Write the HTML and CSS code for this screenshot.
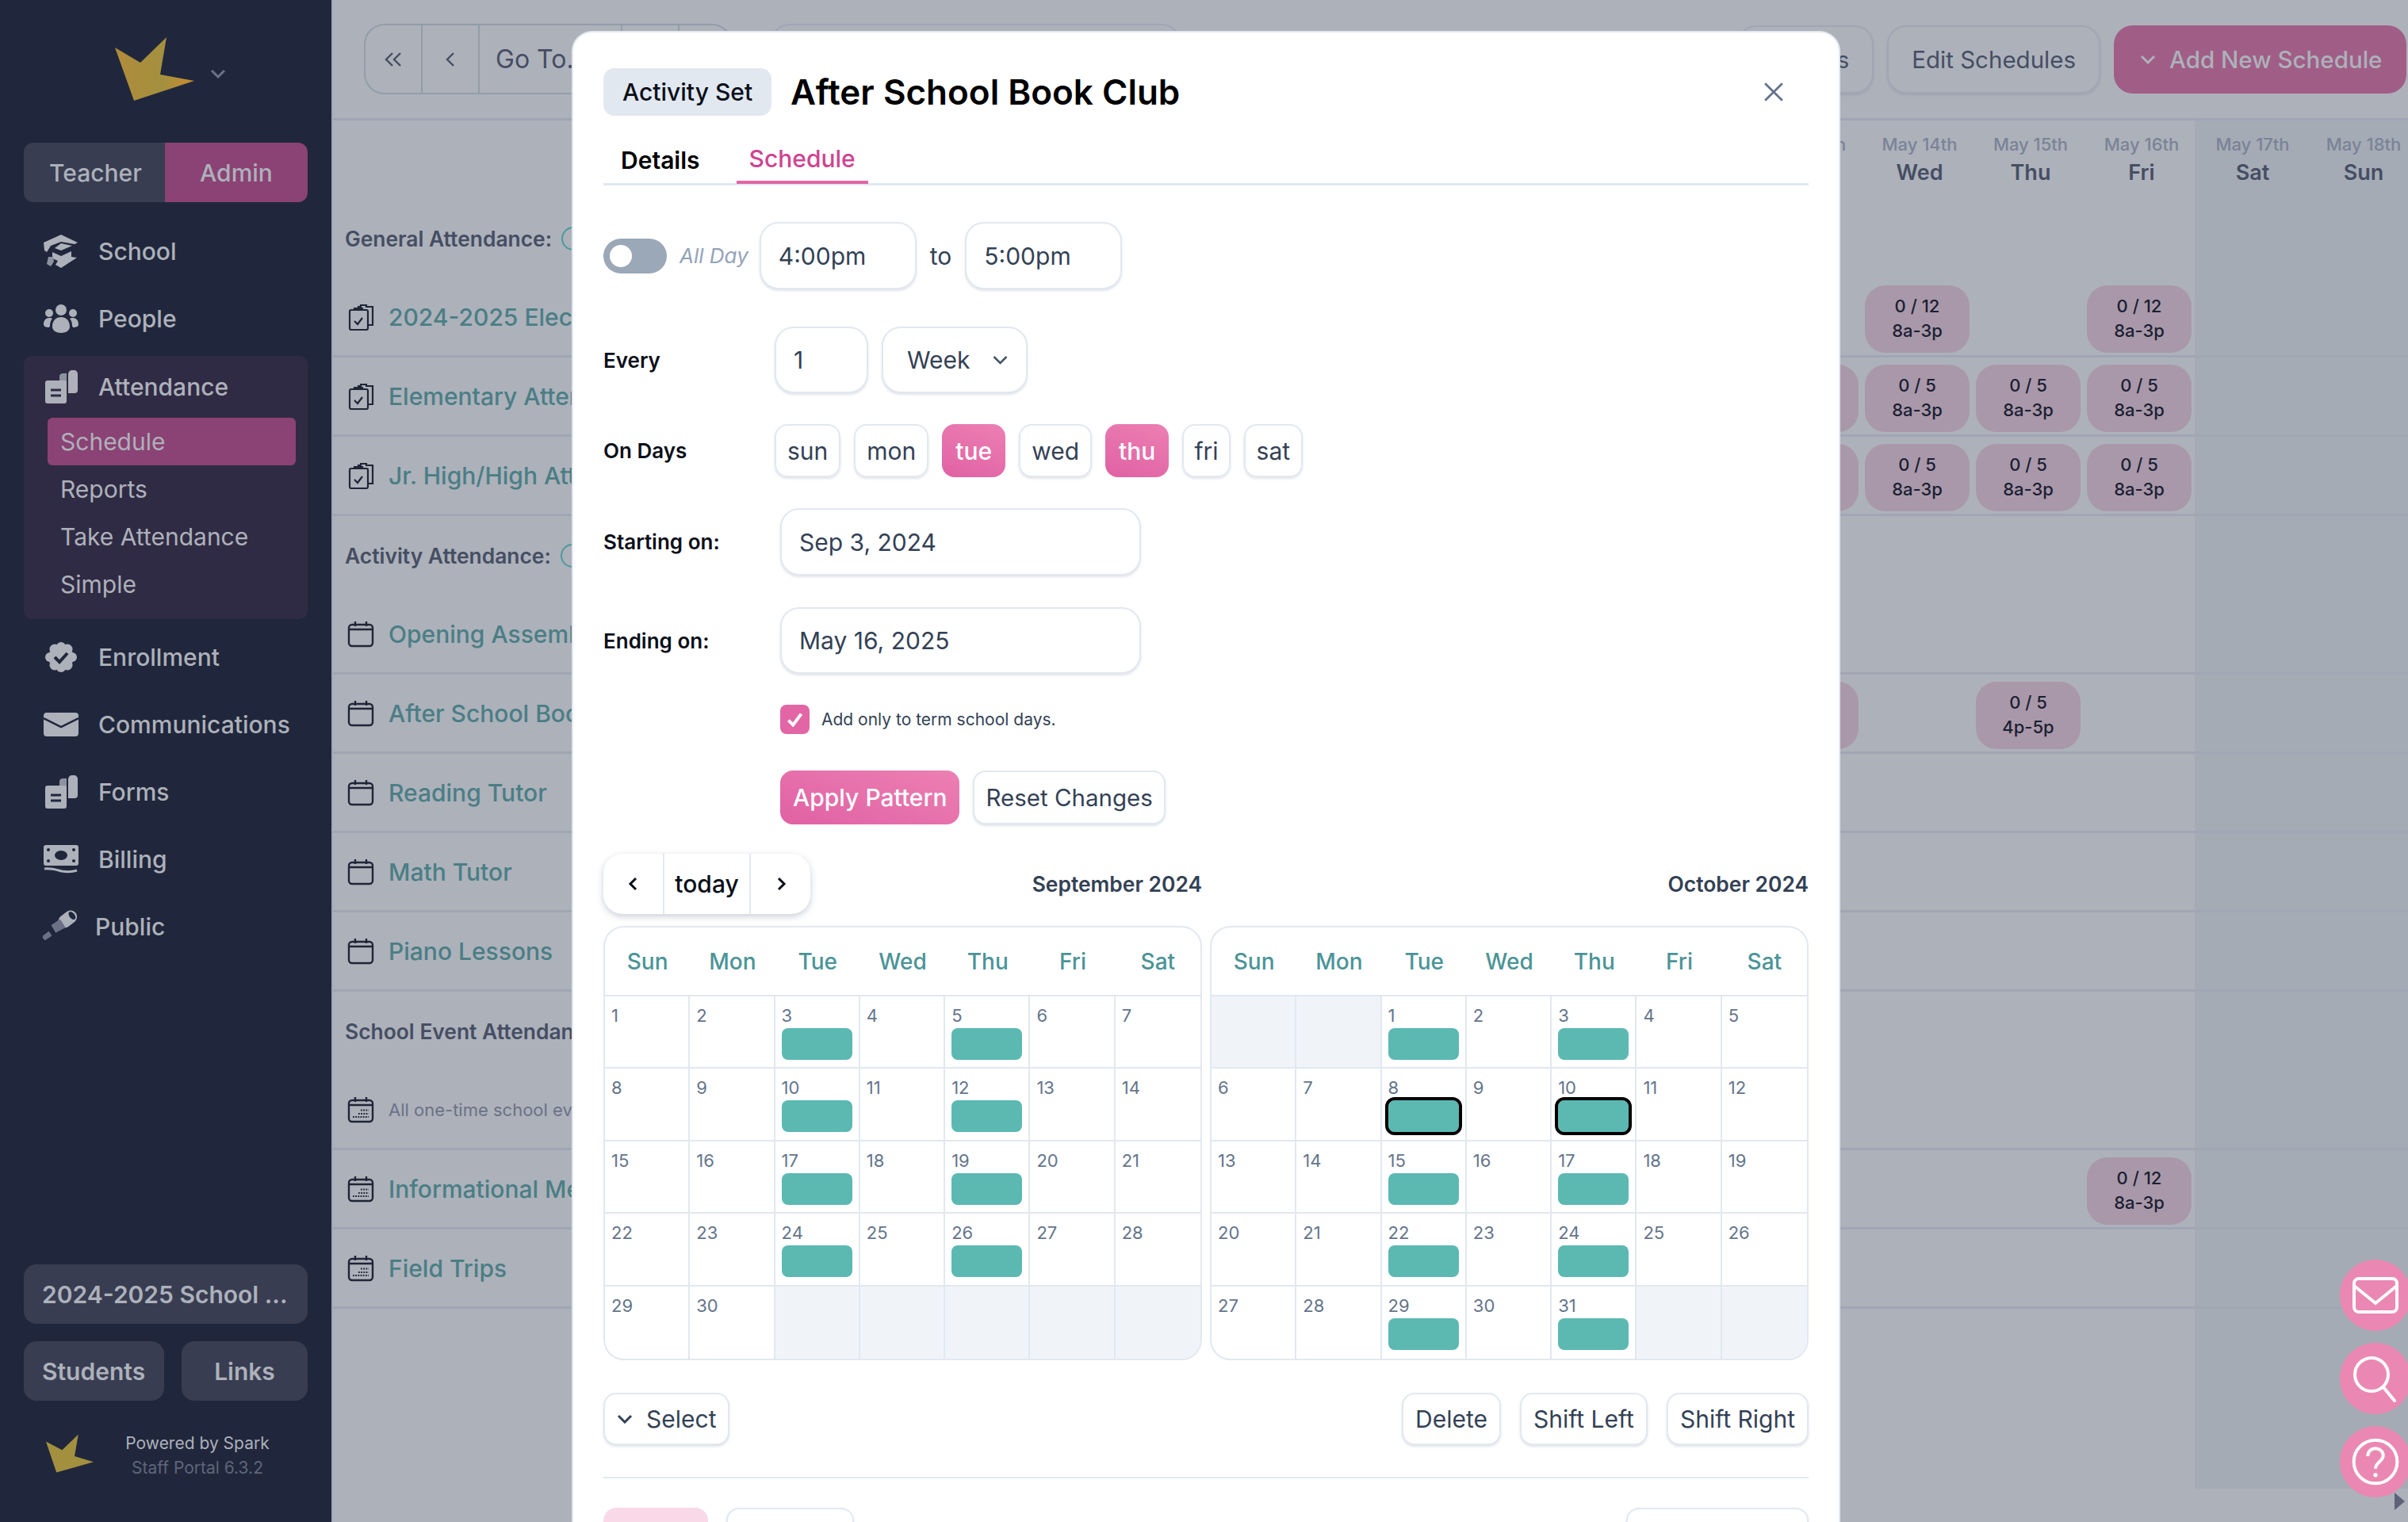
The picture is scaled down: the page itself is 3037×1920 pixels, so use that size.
FILE: index.html
```html
<!DOCTYPE html>
<html lang="en">
<head>
    <meta charset="UTF-8">
    <title>Staff Portal - Schedule</title>
    <link rel="stylesheet" href="styles.css">
</head>
<body>
    <aside class="sidebar">
        <div class="brand">
            <svg class="brand-star" viewBox="0 0 100 80">
                <defs>
                    <linearGradient id="starfill" x1="0" y1="0" x2="1" y2="0">
                        <stop offset="0" stop-color="#b08c3a"/>
                        <stop offset=".6" stop-color="#a3903f"/>
                        <stop offset="1" stop-color="#c98a2e"/>
                    </linearGradient>
                </defs>
                <polygon fill="url(#starfill)" points="0,13 32,32 65,0 57,47 100,55 24,80"/>
            </svg>
            <svg class="brand-caret" viewBox="0 0 20 12"><path d="M2 2l8 8 8-8" fill="none" stroke="#6b7287" stroke-width="3"/></svg>
        </div>
        <div class="role-switch">
            <div class="role">Teacher</div>
            <div class="role role-on">Admin</div>
        </div>
        <nav class="side-nav">
            <a class="side-link">
                <svg class="side-icon" viewBox="0 0 44 42"><path fill="#adb1ba" d="M22 0l21 10-4 2-17-3-13 5-5 8-3-2-1-10z"/><path fill="#adb1ba" d="M22 11l14 3-14 6-8-3z"/><path fill="#adb1ba" d="M11 22l11 5 13-6v7l7 1-20 13-7-4 3-5-7-3z"/><path fill="#8d92a0" d="M6 28h6l1 6-4 6-5-3z"/></svg>
                <span>School</span>
            </a>
            <a class="side-link">
                <svg class="side-icon" viewBox="0 0 44 36"><circle cx="22" cy="7" r="7" fill="#adb1ba"/><circle cx="7" cy="11" r="5" fill="#adb1ba"/><circle cx="37" cy="11" r="5" fill="#adb1ba"/><path fill="#adb1ba" d="M11 28c0-8 5-12 11-12s11 4 11 12c0 5-5 8-11 8s-11-3-11-8zM0 25c0-5 3-8 7-8 2 0 3 .5 4 1-2 2-3 5-3 9l-1 2c-4 0-7-1-7-4zM44 25c0-5-3-8-7-8-2 0-3 .5-4 1 2 2 3 5 3 9l1 2c4 0 7-1 7-4z"/></svg>
                <span>People</span>
            </a>
            <div class="side-group">
                <a class="side-link">
                    <svg class="side-icon" viewBox="0 0 44 42"><path fill="#adb1ba" d="M31 6c0-4 2-6 5-6h2c3 0 5 2 5 5v20c0 3-2 4-4 4h-8z"/><path fill="#8d92a0" d="M20 8c0-3 2-4 4-4h5v12h-9z"/><rect x="2" y="13" width="27" height="29" rx="3" fill="#adb1ba"/><path stroke="#302b44" stroke-width="3" d="M9 25h13M9 32h13"/></svg>
                    <span>Attendance</span>
                </a>
                <a class="sub-link sub-on">Schedule</a>
                <a class="sub-link">Reports</a>
                <a class="sub-link">Take Attendance</a>
                <a class="sub-link">Simple</a>
            </div>
            <a class="side-link">
                <svg class="side-icon" viewBox="0 0 44 38"><g fill="#adb1ba"><ellipse cx="22" cy="19" rx="16" ry="15"/><circle cx="14" cy="9" r="6.5"/><circle cx="30" cy="9" r="6.5"/><circle cx="14" cy="29" r="6.5"/><circle cx="30" cy="29" r="6.5"/><circle cx="8" cy="19" r="6"/><circle cx="36" cy="19" r="6"/><circle cx="22" cy="6" r="6"/><circle cx="22" cy="32" r="6"/></g><path fill="none" stroke="#20273c" stroke-width="4" d="M14 19l6 6 10-11"/></svg>
                <span>Enrollment</span>
            </a>
            <a class="side-link">
                <svg class="side-icon" viewBox="0 0 44 30"><rect y="0" width="44" height="30" rx="4" fill="#adb1ba"/><path fill="none" stroke="#20273c" stroke-width="2.5" d="M0 7l22 11L44 7"/></svg>
                <span>Communications</span>
            </a>
            <a class="side-link">
                <svg class="side-icon" viewBox="0 0 44 42"><path fill="#adb1ba" d="M31 6c0-4 2-6 5-6h2c3 0 5 2 5 5v20c0 3-2 4-4 4h-8z"/><path fill="#8d92a0" d="M20 8c0-3 2-4 4-4h5v12h-9z"/><rect x="2" y="13" width="27" height="29" rx="3" fill="#adb1ba"/><path stroke="#20273c" stroke-width="3" d="M9 25h13M9 32h13"/></svg>
                <span>Forms</span>
            </a>
            <a class="side-link">
                <svg class="side-icon" viewBox="0 0 44 36"><rect y="0" width="44" height="26" rx="3" fill="#adb1ba"/><ellipse cx="22" cy="13" rx="8" ry="6" fill="#20273c"/><circle cx="6" cy="6" r="2" fill="#20273c"/><circle cx="38" cy="6" r="2" fill="#20273c"/><circle cx="6" cy="20" r="2" fill="#20273c"/><circle cx="38" cy="20" r="2" fill="#20273c"/><path fill="none" stroke="#adb1ba" stroke-width="3" d="M1 30c8-1 14 1 22 3 6 1 13 1 19-1"/></svg>
                <span>Billing</span>
            </a>
            <a class="side-link side-link-tight">
                <svg class="side-icon side-icon-big" viewBox="0 0 46 46"><g transform="rotate(-38 33 13)"><rect x="20" y="5" width="27" height="17" rx="8.5" fill="#adb1ba"/><ellipse cx="41" cy="13.500" rx="3.500" ry="6" fill="#20273c"/></g><g fill="#6b7287"><path d="M12 21l12-8 7 11-13 7z"/><path d="M1 35l8-6 4 6-9 6-3-3z"/></g></svg>
                <span>Public</span>
            </a>
        </nav>
        <div class="side-bottom">
            <div class="side-btn">2024-2025 School ...</div>
            <div class="side-btn-row">
                <div class="side-btn side-btn-students">Students</div>
                <div class="side-btn side-btn-links">Links</div>
            </div>
            <div class="powered">
                <svg class="powered-star" viewBox="0 0 100 80"><polygon fill="#a3903f" points="0,15 34,33 68,0 60,46 100,58 22,80"/></svg>
                <div class="powered-text">
                    <div>Powered by Spark</div>
                    <div class="powered-ver">Staff Portal 6.3.2</div>
                </div>
            </div>
        </div>
    </aside>

    <main class="main">
        <header class="topbar">
            <div class="btn-group">
                <div class="bg-cell cell-first">
                    <svg class="bar-icon" viewBox="0 0 24 20"><path d="M11 2L3 10l8 8M21 2l-8 8 8 8" fill="none" stroke="#454e63" stroke-width="2.4"/></svg>
                </div>
                <div class="bg-cell cell-mid">
                    <svg class="bar-icon" viewBox="0 0 24 20"><path d="M16 2l-8 8 8 8" fill="none" stroke="#454e63" stroke-width="2.4"/></svg>
                </div>
                <div class="bg-cell cell-go">Go To...</div>
                <div class="bg-cell cell-mid"></div>
                <div class="bg-cell cell-last"></div>
            </div>
            <div class="btn-outline btn-range"></div>
            <div class="bar-right">
                <div class="btn-outline btn-filters">Filters</div>
                <div class="btn-outline">Edit Schedules</div>
                <div class="btn-add">
                    <svg class="add-caret" viewBox="0 0 20 12"><path d="M2 2l8 8 8-8" fill="none" stroke="#adb1ba" stroke-width="3"/></svg>
                    Add New Schedule
                </div>
            </div>
        </header>

        <div class="row row-head">
            <div class="name"></div>
            <div class="day"><small>May 13th</small>Tue</div>
            <div class="day"><small>May 14th</small>Wed</div>
            <div class="day"><small>May 15th</small>Thu</div>
            <div class="day"><small>May 16th</small>Fri</div>
            <div class="day wknd"><small>May 17th</small>Sat</div>
            <div class="day wknd"><small>May 18th</small>Sun</div>
        </div>

        <div class="row row-section">
            <div class="name section-name">General Attendance:<span class="help-dot"></span></div>
            <div></div><div></div><div></div><div></div><div class="wknd"></div><div class="wknd"></div>
        </div>
        <div class="row">
            <div class="name"><svg class="row-icon"><use href="#clip"/></svg><a>2024-2025 Elective Attendance</a></div>
            <div></div><div><div class="slot">0 / 12<br>8a-3p</div></div><div></div><div><div class="slot">0 / 12<br>8a-3p</div></div><div class="wknd"></div><div class="wknd"></div>
        </div>
        <div class="row">
            <div class="name"><svg class="row-icon"><use href="#clip"/></svg><a>Elementary Attendance</a></div>
            <div><div class="slot">0 / 5<br>8a-3p</div></div><div><div class="slot">0 / 5<br>8a-3p</div></div><div><div class="slot">0 / 5<br>8a-3p</div></div><div><div class="slot">0 / 5<br>8a-3p</div></div><div class="wknd"></div><div class="wknd"></div>
        </div>
        <div class="row">
            <div class="name"><svg class="row-icon"><use href="#clip"/></svg><a>Jr. High/High Attendance</a></div>
            <div><div class="slot">0 / 5<br>8a-3p</div></div><div><div class="slot">0 / 5<br>8a-3p</div></div><div><div class="slot">0 / 5<br>8a-3p</div></div><div><div class="slot">0 / 5<br>8a-3p</div></div><div class="wknd"></div><div class="wknd"></div>
        </div>

        <div class="row row-section">
            <div class="name section-name">Activity Attendance:<span class="help-dot"></span></div>
            <div></div><div></div><div></div><div></div><div class="wknd"></div><div class="wknd"></div>
        </div>
        <div class="row">
            <div class="name"><svg class="row-icon"><use href="#cal"/></svg><a>Opening Assembly</a></div>
            <div></div><div></div><div></div><div></div><div class="wknd"></div><div class="wknd"></div>
        </div>
        <div class="row">
            <div class="name"><svg class="row-icon"><use href="#cal"/></svg><a>After School Book Club</a></div>
            <div><div class="slot">0 / 5<br>4p-5p</div></div><div></div><div><div class="slot">0 / 5<br>4p-5p</div></div><div></div><div class="wknd"></div><div class="wknd"></div>
        </div>
        <div class="row">
            <div class="name"><svg class="row-icon"><use href="#cal"/></svg><a>Reading Tutor</a></div>
            <div></div><div></div><div></div><div></div><div class="wknd"></div><div class="wknd"></div>
        </div>
        <div class="row">
            <div class="name"><svg class="row-icon"><use href="#cal"/></svg><a>Math Tutor</a></div>
            <div></div><div></div><div></div><div></div><div class="wknd"></div><div class="wknd"></div>
        </div>
        <div class="row">
            <div class="name"><svg class="row-icon"><use href="#cal"/></svg><a>Piano Lessons</a></div>
            <div></div><div></div><div></div><div></div><div class="wknd"></div><div class="wknd"></div>
        </div>

        <div class="row row-section">
            <div class="name section-name">School Event Attendance:</div>
            <div></div><div></div><div></div><div></div><div class="wknd"></div><div class="wknd"></div>
        </div>
        <div class="row">
            <div class="name"><svg class="row-icon"><use href="#caldots"/></svg><span class="name-note">All one-time school events</span></div>
            <div></div><div></div><div></div><div></div><div class="wknd"></div><div class="wknd"></div>
        </div>
        <div class="row">
            <div class="name"><svg class="row-icon"><use href="#caldots"/></svg><a>Informational Meeting</a></div>
            <div></div><div></div><div></div><div><div class="slot">0 / 12<br>8a-3p</div></div><div class="wknd"></div><div class="wknd"></div>
        </div>
        <div class="row">
            <div class="name"><svg class="row-icon"><use href="#caldots"/></svg><a>Field Trips</a></div>
            <div></div><div></div><div></div><div></div><div class="wknd"></div><div class="wknd"></div>
        </div>
        <div class="row row-fill">
            <div class="name"></div>
            <div></div><div></div><div></div><div></div><div class="wknd"></div><div class="wknd"></div>
        </div>
    </main>

    <svg class="sprites" width="0" height="0">
        <symbol id="clip" viewBox="0 0 34 34">
            <g fill="none" stroke="#1f2637" stroke-width="2.2">
                <path d="M14 7V4h3V2h7v2h8v23h-6"/>
                <rect x="3" y="8" width="23" height="25" rx="2"/>
                <path d="M9 8V6h10v2"/>
                <path d="M9 22l4 4 6-8"/>
            </g>
        </symbol>
        <symbol id="cal" viewBox="0 0 34 34">
            <g fill="none" stroke="#1f2637" stroke-width="2.4">
                <rect x="2" y="5" width="30" height="27" rx="4"/>
                <path d="M10 1v6M24 1v6M2 11h30"/>
            </g>
        </symbol>
        <symbol id="caldots" viewBox="0 0 34 34">
            <g fill="none" stroke="#1f2637" stroke-width="2.4">
                <rect x="2" y="5" width="30" height="27" rx="4"/>
                <path d="M10 1v6M24 1v6M2 11h30"/>
                <path stroke-width="1.8" stroke-dasharray="1.8 1.4" d="M7 26h20M14 22h13M17 17.500h10"/>
            </g>
        </symbol>
    </svg>

    <div class="side-tools">
        <div class="tool">
            <svg class="tool-icon" viewBox="0 0 60 46"><rect x="3" y="2" width="54" height="42" rx="6" fill="none" stroke="#fff" stroke-width="4"/><path d="M3 11l27 22 27-22" fill="none" stroke="#fff" stroke-width="4"/></svg>
        </div>
        <div class="tool">
            <svg class="tool-icon" viewBox="0 0 60 60"><circle cx="25" cy="25" r="21" fill="none" stroke="#fff" stroke-width="4"/><path d="M40 41l14 17" fill="none" stroke="#fff" stroke-width="4" stroke-linecap="round"/></svg>
        </div>
        <div class="tool">
            <svg class="tool-icon" viewBox="0 0 68 68"><circle cx="34" cy="34" r="31" fill="none" stroke="#fff" stroke-width="4.5"/><path d="M23 26c0-7 5-11 11-11s11 4 11 10c0 9-11 9-11 19" fill="none" stroke="#fff" stroke-width="4.5"/><circle cx="34" cy="53" r="3" fill="#fff"/></svg>
        </div>
    </div>
    <div class="scroll-arrow"></div>

    <section class="modal">
        <div class="modal-head">
            <div class="kind-badge">Activity Set</div>
            <h1 class="modal-title">After School Book Club</h1>
            <svg class="modal-close" viewBox="0 0 24 24"><path d="M2 2l20 20M22 2L2 22" fill="none" stroke="#64748b" stroke-width="2.6"/></svg>
        </div>
        <div class="tabs">
            <div class="tab">Details</div>
            <div class="tab tab-on">Schedule</div>
        </div>

        <div class="form-row row-time">
            <div class="toggle"><span class="toggle-knob"></span></div>
            <span class="all-day">All Day</span>
            <div class="field field-time">4:00pm</div>
            <span class="to-word">to</span>
            <div class="field field-time">5:00pm</div>
        </div>

        <div class="form-row row-every">
            <label class="form-label">Every</label>
            <div class="field field-num">1</div>
            <div class="field field-select">Week
                <svg class="select-caret" viewBox="0 0 20 12"><path d="M2 2l8 8 8-8" fill="none" stroke="#475569" stroke-width="2.6"/></svg>
            </div>
        </div>

        <div class="form-row row-days">
            <label class="form-label">On Days</label>
            <div class="day-btn">sun</div>
            <div class="day-btn">mon</div>
            <div class="day-btn day-on">tue</div>
            <div class="day-btn">wed</div>
            <div class="day-btn day-on">thu</div>
            <div class="day-btn day-fri">fri</div>
            <div class="day-btn">sat</div>
        </div>

        <div class="form-row row-date">
            <label class="form-label label-wide">Starting on:</label>
            <div class="field field-date">Sep 3, 2024</div>
        </div>
        <div class="form-row row-date row-date-2">
            <label class="form-label label-wide">Ending on:</label>
            <div class="field field-date">May 16, 2025</div>
        </div>

        <div class="form-row row-check">
            <span class="checkbox"><svg viewBox="0 0 20 20"><path d="M3 11l5 5 9-12" fill="none" stroke="#fff" stroke-width="3.500"/></svg></span>
            <span class="check-text">Add only to term school days.</span>
        </div>

        <div class="form-row row-apply">
            <div class="btn btn-pink">Apply Pattern</div>
            <div class="btn btn-reset">Reset Changes</div>
        </div>

        <div class="cal-top">
            <div class="cal-top-left">
                <div class="cal-nav">
                    <div class="cal-nav-btn cal-nav-arrow"><svg viewBox="0 0 14 20"><path d="M10 3L3 10l7 7" fill="none" stroke="#0b0f19" stroke-width="3"/></svg></div>
                    <div class="cal-nav-btn cal-nav-today">today</div>
                    <div class="cal-nav-btn cal-nav-arrow"><svg viewBox="0 0 14 20"><path d="M4 3l7 7-7 7" fill="none" stroke="#0b0f19" stroke-width="3"/></svg></div>
                </div>
                <div class="cal-month">September 2024</div>
            </div>
            <div class="cal-month">October 2024</div>
        </div>

        <div class="cal-pair">
            <div class="cal">
                <div class="cal-dow">Sun</div><div class="cal-dow">Mon</div><div class="cal-dow">Tue</div><div class="cal-dow">Wed</div><div class="cal-dow">Thu</div><div class="cal-dow">Fri</div><div class="cal-dow">Sat</div>
                <div class="cell">1</div><div class="cell">2</div><div class="cell">3<div class="chip"></div></div><div class="cell">4</div><div class="cell">5<div class="chip"></div></div><div class="cell">6</div><div class="cell">7</div>
                <div class="cell">8</div><div class="cell">9</div><div class="cell">10<div class="chip"></div></div><div class="cell">11</div><div class="cell">12<div class="chip"></div></div><div class="cell">13</div><div class="cell">14</div>
                <div class="cell">15</div><div class="cell">16</div><div class="cell">17<div class="chip"></div></div><div class="cell">18</div><div class="cell">19<div class="chip"></div></div><div class="cell">20</div><div class="cell">21</div>
                <div class="cell">22</div><div class="cell">23</div><div class="cell">24<div class="chip"></div></div><div class="cell">25</div><div class="cell">26<div class="chip"></div></div><div class="cell">27</div><div class="cell">28</div>
                <div class="cell">29</div><div class="cell">30</div><div class="cell cell-off"></div><div class="cell cell-off"></div><div class="cell cell-off"></div><div class="cell cell-off"></div><div class="cell cell-off"></div>
            </div>
            <div class="cal">
                <div class="cal-dow">Sun</div><div class="cal-dow">Mon</div><div class="cal-dow">Tue</div><div class="cal-dow">Wed</div><div class="cal-dow">Thu</div><div class="cal-dow">Fri</div><div class="cal-dow">Sat</div>
                <div class="cell cell-off"></div><div class="cell cell-off"></div><div class="cell">1<div class="chip"></div></div><div class="cell">2</div><div class="cell">3<div class="chip"></div></div><div class="cell">4</div><div class="cell">5</div>
                <div class="cell">6</div><div class="cell">7</div><div class="cell">8<div class="chip chip-sel"></div></div><div class="cell">9</div><div class="cell">10<div class="chip chip-sel"></div></div><div class="cell">11</div><div class="cell">12</div>
                <div class="cell">13</div><div class="cell">14</div><div class="cell">15<div class="chip"></div></div><div class="cell">16</div><div class="cell">17<div class="chip"></div></div><div class="cell">18</div><div class="cell">19</div>
                <div class="cell">20</div><div class="cell">21</div><div class="cell">22<div class="chip"></div></div><div class="cell">23</div><div class="cell">24<div class="chip"></div></div><div class="cell">25</div><div class="cell">26</div>
                <div class="cell">27</div><div class="cell">28</div><div class="cell">29<div class="chip"></div></div><div class="cell">30</div><div class="cell">31<div class="chip"></div></div><div class="cell cell-off"></div><div class="cell cell-off"></div>
            </div>
        </div>

        <div class="form-row row-actions">
            <div class="btn btn-select">
                <svg class="select-caret-left" viewBox="0 0 20 12"><path d="M2 2l8 8 8-8" fill="none" stroke="#334155" stroke-width="3"/></svg>
                Select
            </div>
            <div class="actions-right">
                <div class="btn">Delete</div>
                <div class="btn">Shift Left</div>
                <div class="btn">Shift Right</div>
            </div>
        </div>

        <hr class="modal-rule">

        <div class="form-row row-foot">
            <div class="btn foot-save"></div>
            <div class="btn foot-cancel"></div>
            <div class="btn foot-other"></div>
        </div>
    </section>
</body>
</html>
```

FILE: styles.css
```css
* {
    box-sizing: border-box;
}
html, body {
    margin: 0;
    height: 100%;
}
body {
    font-family: "Inter", "Liberation Sans", sans-serif;
    font-size: 30px;
    display: flex;
    height: 1920px;
    overflow: hidden;
    background-color: #adb1ba;
    color: #454e63;
    position: relative;
}

/* sidebar */
.sidebar {
    width: 418px;
    flex: none;
    height: 1920px;
    background-color: #20273c;
    color: #adb1ba;
    padding: 0 30px;
    display: flex;
    flex-direction: column;
}
.brand {
    height: 180px;
    position: relative;
    display: flex;
    align-items: flex-start;
    padding: 47px 0 0 115px;
}
.brand-star {
    width: 100px;
    height: 80px;
}
.brand-caret {
    width: 20px;
    height: 12px;
    margin: 40px 0 0 20px;
}
.role-switch {
    display: flex;
    height: 75px;
    border-radius: 12px;
    overflow: hidden;
}
.role {
    width: 178px;
    background-color: #383d52;
    display: flex;
    align-items: center;
    padding-left: 32px;
    font-weight: 500;
}
.role-on {
    width: 180px;
    background-color: #8b4274;
    justify-content: center;
    padding-left: 0;
}
.side-nav {
    margin-top: 19px;
}
.side-link {
    height: 85px;
    display: flex;
    align-items: center;
    gap: 25px;
    padding-left: 25px;
    font-weight: 500;
}
.side-link-tight {
    gap: 23px;
    padding-left: 23px;
}
.side-icon {
    width: 44px;
    height: 42px;
    flex: none;
}
.side-icon-big {
    height: 46px;
}
.side-group {
    background-color: #302b44;
    border-radius: 10px;
    height: 332px;
    margin: 5px 0;
}
.side-group .side-link {
    height: 78px;
}
.sub-link {
    display: flex;
    align-items: center;
    height: 60px;
    margin: 0 15px 0 30px;
    padding-left: 16px;
    border-radius: 6px;
}
.sub-on {
    background-color: #8b4274;
}
.side-bottom {
    margin-top: auto;
    padding-bottom: 53px;
}
.side-btn {
    height: 75px;
    border-radius: 16px;
    background-color: #383d52;
    display: flex;
    align-items: center;
    padding-left: 23px;
    font-weight: 600;
    white-space: nowrap;
}
.side-btn-row {
    display: flex;
    gap: 22px;
    margin-top: 22px;
}
.side-btn-students {
    width: 177px;
}
.side-btn-links {
    flex: 1;
    justify-content: center;
    padding-left: 0;
}
.powered {
    display: flex;
    align-items: flex-start;
    margin-top: 38px;
    padding-left: 28px;
}
.powered-star {
    width: 60px;
    height: 49px;
    margin-top: 4px;
    flex: none;
}
.powered-text {
    flex: 1;
    text-align: center;
    font-size: 21px;
    line-height: 31px;
    padding-right: 8px;
    color: #adb1ba;
}
.powered-ver {
    color: #5f6579;
}

/* main schedule behind the modal */
.main {
    flex: 1;
    height: 1920px;
    border-left: 2px solid #a0a6b3;
    overflow: hidden;
}
.topbar {
    height: 152px;
    border-bottom: 3px solid #a0a6b3;
    display: flex;
    padding: 30px 0 0 39px;
    align-items: flex-start;
}
.btn-group {
    display: flex;
    height: 89px;
    border: 2px solid #919eaa;
    border-radius: 26px;
}
.bg-cell {
    display: flex;
    align-items: center;
    justify-content: center;
    border-left: 2px solid #919eaa;
    width: 72px;
}
.cell-first {
    border-left: 0;
    width: 70px;
}
.cell-go {
    width: 180px;
    justify-content: flex-start;
    padding-left: 20px;
    font-size: 32px;
    white-space: nowrap;
}
.cell-last {
    width: 67px;
}
.bar-icon {
    width: 24px;
    height: 20px;
}
.btn-outline {
    height: 86px;
    padding: 0 29px;
    border: 2px solid #a0a6b3;
    border-radius: 24px;
    display: flex;
    align-items: center;
    white-space: nowrap;
    font-size: 29.5px;
    box-shadow: 0 2px 3px rgba(100, 110, 130, 0.2);
}
.btn-range {
    width: 517px;
    margin-left: 48px;
}
.bar-right {
    margin-left: auto;
    display: flex;
    gap: 17px;
    padding-right: 2px;
    margin-top: 2px;
}
.btn-filters {
    width: 172px;
    justify-content: flex-end;
}
.btn-add {
    height: 86px;
    width: 369px;
    border-radius: 24px;
    background-color: #a05e87;
    color: #adb1ba;
    display: flex;
    align-items: center;
    gap: 17px;
    padding-left: 33px;
    white-space: nowrap;
    font-size: 29.5px;
    font-weight: 500;
}
.add-caret {
    width: 20px;
    height: 12px;
}

.row {
    display: grid;
    grid-template-columns: 1788px repeat(6, 140px);
    height: 100px;
    border-bottom: 3px solid #a0a6b3;
}
.row-section {
    border-bottom: 0;
}
.row-head {
    height: 99px;
    border-bottom: 0;
}
.row-fill {
    height: 227px;
    border-bottom: 0;
}
.wknd {
    background-color: #a5abb5;
}
.day {
    text-align: center;
    font-size: 27px;
    font-weight: 600;
    line-height: 36px;
    padding: 12px 0 0 6px;
}
.day small {
    display: block;
    font-size: 22px;
    font-weight: 500;
    color: #7a8397;
    line-height: 36px;
}
.name {
    display: flex;
    align-items: center;
    padding-left: 18px;
    overflow: hidden;
    white-space: nowrap;
}
.name a {
    color: #4a7e85;
    font-weight: 500;
}
.name-note {
    font-size: 22px;
    color: #6b7287;
}
.section-name {
    padding-left: 15px;
    font-size: 26.4px;
    font-weight: 600;
}
.help-dot {
    width: 30px;
    height: 30px;
    border: 2.5px solid #4a9a9a;
    border-radius: 50%;
    margin-left: 12px;
}
.row-icon {
    width: 34px;
    height: 34px;
    margin-right: 18px;
    flex: none;
}
.slot {
    width: 132px;
    height: 85px;
    margin: 9px 0 0 4px;
    padding-top: 11px;
    border-radius: 26px;
    background-color: #a998a9;
    color: #1a2033;
    font-size: 22px;
    font-weight: 500;
    line-height: 31px;
    text-align: center;
}
.sprites {
    position: absolute;
}

/* floating tools, these sit over the page */
.side-tools {
    position: absolute;
    right: -4px;
    top: 1589px;
    display: flex;
    flex-direction: column;
    gap: 15px;
}
.tool {
    width: 90px;
    height: 90px;
    border-radius: 50%;
    background-color: #ea88b3;
    display: flex;
    align-items: center;
    justify-content: center;
}
.tool-icon {
    width: 60px;
    height: 60px;
}
.scroll-arrow {
    position: absolute;
    left: 3020px;
    top: 1883px;
    border-left: 13px solid #5e637a;
    border-top: 11px solid transparent;
    border-bottom: 11px solid transparent;
}

/* modal */
.modal {
    position: absolute;
    left: 721px;
    top: 39px;
    width: 1600px;
    height: 1920px;
    padding: 45px 38px 0;
    background-color: #fff;
    border: 2px solid #e2e8f0;
    border-radius: 26px;
    color: #334155;
}
.modal-head {
    display: flex;
    align-items: center;
    height: 60px;
    gap: 24px;
}
.kind-badge {
    width: 212px;
    height: 60px;
    border-radius: 14px;
    background-color: #e2e8f0;
    color: #0b0f19;
    font-weight: 500;
    display: flex;
    align-items: center;
    justify-content: center;
}
.modal-title {
    margin: 0;
    font-size: 44px;
    font-weight: 600;
    color: #000;
}
.modal-close {
    width: 26px;
    height: 26px;
    margin-left: auto;
    margin-right: 31px;
}
.tabs {
    display: flex;
    gap: 30px;
    height: 62px;
    margin-top: 26px;
    padding-left: 6px;
    border-bottom: 3px solid #e2e8f0;
}
.tab {
    height: 60px;
    padding: 0 16px;
    display: flex;
    align-items: center;
    color: #000;
    font-weight: 600;
}
.tab-on {
    color: #cf4391;
    font-weight: 500;
    border-bottom: 4px solid #e266a5;
}
.form-row {
    display: flex;
    align-items: center;
}
.field {
    border: 2px solid #e2e8f0;
    border-radius: 24px;
    background-color: #fff;
    box-shadow: 0 2px 3px rgba(148, 163, 184, 0.3);
    display: flex;
    align-items: center;
    padding-left: 22px;
    height: 85px;
}
.row-time {
    margin-top: 46px;
    height: 85px;
}
.toggle {
    width: 80px;
    height: 44px;
    border-radius: 22px;
    background-color: #9aa8b8;
    padding: 8px;
}
.toggle-knob {
    display: block;
    width: 28px;
    height: 28px;
    border-radius: 50%;
    background-color: #fff;
}
.all-day {
    font-size: 26px;
    font-style: italic;
    color: #94a3b8;
    margin: 0 14px 0 16px;
    white-space: nowrap;
}
.field-time {
    width: 198px;
}
.to-word {
    margin: 0 17px;
}
.row-every {
    margin-top: 47px;
}
.row-every .field {
    height: 84px;
}
.form-label {
    width: 216px;
    flex: none;
    font-size: 26px;
    font-weight: 600;
    color: #0b0f19;
}
.label-wide {
    width: 223px;
}
.field-num {
    width: 118px;
    margin-right: 17px;
}
.field-select {
    width: 184px;
    padding-left: 30px;
}
.select-caret {
    width: 21px;
    height: 12px;
    margin-left: 28px;
}
.row-days {
    margin-top: 39px;
    gap: 17px;
}
.row-days .form-label {
    margin-right: -17px;
}
.day-btn {
    height: 67px;
    padding: 0 14px;
    border: 2px solid #e2e8f0;
    border-radius: 16px;
    box-shadow: 0 2px 3px rgba(148, 163, 184, 0.3);
    display: flex;
    align-items: center;
}
.day-on {
    border: 0;
    padding: 0 17px;
    background-image: linear-gradient(20deg, #e061a3, #ec80b3);
    color: #fff;
    font-weight: 500;
    box-shadow: none;
}
.day-fri {
    padding: 0 13px;
}
.row-date {
    margin-top: 39px;
}
.row-date-2 .field {
    height: 84px;
}
.row-date-2 {
    margin-top: 40px;
}
.field-date {
    width: 455px;
}
.row-check {
    margin-top: 39px;
    padding-left: 223px;
    height: 37px;
}
.checkbox {
    width: 37px;
    height: 37px;
    border-radius: 8px;
    background-color: #e266a5;
    padding: 7px;
    margin-right: 15px;
}
.checkbox svg {
    display: block;
}
.check-text {
    font-size: 21px;
}
.row-apply {
    margin-top: 46px;
    padding-left: 223px;
    gap: 17px;
}
.btn {
    height: 68px;
    padding: 0 15px;
    border: 2px solid #e2e8f0;
    border-radius: 16px;
    background-color: #fff;
    box-shadow: 0 2px 3px rgba(148, 163, 184, 0.3);
    display: flex;
    align-items: center;
    white-space: nowrap;
}
.btn-pink {
    border: 0;
    padding: 0 16px;
    background-image: linear-gradient(20deg, #e061a3, #ec80b3);
    color: #fff;
    font-weight: 500;
    box-shadow: none;
}
.btn-reset {
    padding: 0 14px;
    font-size: 29.5px;
}

/* calendars */
.cal-top {
    display: grid;
    grid-template-columns: 755px 1fr;
    margin-top: 37px;
    align-items: center;
    gap: 10px;
}
.cal-top > .cal-month {
    text-align: right;
}
.cal-top-left {
    display: flex;
    justify-content: space-between;
    align-items: center;
}
.cal-month {
    font-size: 26.4px;
    font-weight: 600;
}
.cal-nav {
    display: flex;
    height: 76px;
    width: 261px;
    border-radius: 24px;
    box-shadow: 0 3px 8px rgba(100, 116, 139, 0.35);
    overflow: hidden;
}
.cal-nav-btn {
    display: flex;
    align-items: center;
    justify-content: center;
}
.cal-nav-arrow {
    flex: 1;
}
.cal-nav-arrow svg {
    width: 14px;
    height: 20px;
}
.cal-nav-today {
    width: 111px;
    border-left: 2px solid #e2e8f0;
    border-right: 2px solid #e2e8f0;
    color: #0b0f19;
    font-weight: 500;
}
.cal-pair {
    display: grid;
    grid-template-columns: 755px 755px;
    gap: 10px;
    margin-top: 15px;
}
.cal {
    display: grid;
    grid-template-columns: repeat(7, 1fr);
    grid-template-rows: 87px repeat(5, 91.4px);
    border: 2px solid #e2e8f0;
    border-radius: 26px;
    overflow: hidden;
    height: 548px;
}
.cal-dow {
    display: flex;
    align-items: center;
    justify-content: center;
    color: #4b9497;
    font-size: 28px;
    font-weight: 500;
    border-bottom: 2px solid #e2e8f0;
}
.cell {
    border-right: 2px solid #e2e8f0;
    border-bottom: 2px solid #e2e8f0;
    padding: 10px 8px 0;
    font-size: 22px;
    line-height: 28px;
    color: #64748b;
}
.cell:nth-child(7n) {
    border-right: 0;
}
.cell:nth-last-child(-n+7) {
    border-bottom: 0;
}
.cell-off {
    background-color: #f0f4f9;
}
.chip {
    height: 40px;
    margin-top: 2px;
    border-radius: 8px;
    background-color: #5bb9b2;
}
.chip-sel {
    outline: 4px solid #000;
    outline-offset: 0;
}

.row-actions {
    margin-top: 41px;
    justify-content: space-between;
}
.btn-select {
    height: 66px;
    gap: 17px;
}
.select-caret-left {
    width: 20px;
    height: 12px;
}
.actions-right {
    display: flex;
    gap: 24px;
}
.actions-right .btn {
    height: 66px;
}
.modal-rule {
    border: 0;
    border-top: 2px solid #e2e8f0;
    margin: 40px 0 0;
}
.row-foot {
    margin-top: 37px;
}
.foot-save {
    width: 132px;
    border: 0;
    background-color: #f9d9e8;
    box-shadow: none;
}
.foot-cancel {
    width: 161px;
    margin-left: 23px;
}
.foot-other {
    width: 230px;
    margin-left: auto;
}
```
